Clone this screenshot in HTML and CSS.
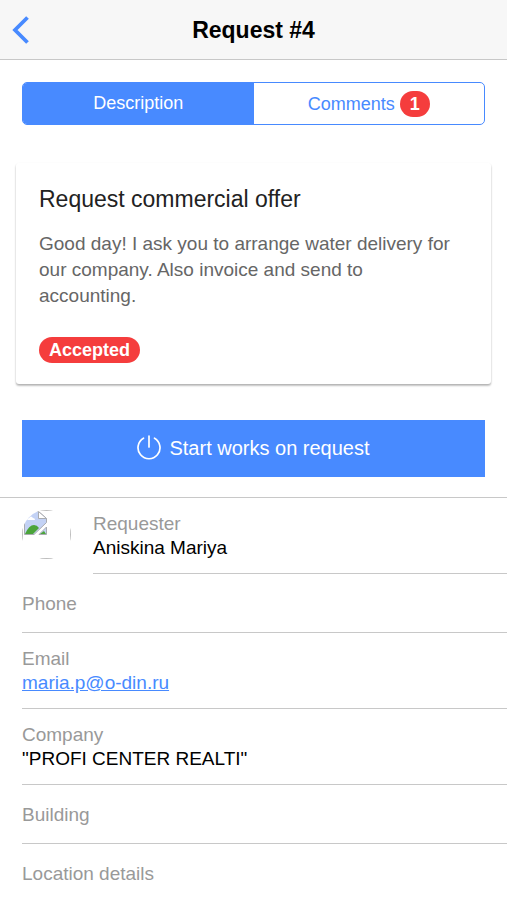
FILE: index.html
```html
<!DOCTYPE html>
<html lang="en">
  <head>
    <meta charset="UTF-8" />
    <meta name="viewport" content="width=device-width, initial-scale=1.0" />
    <title>Request #4</title>
    <link rel="stylesheet" href="styles.css">
  </head>
  <body>
    <header class="toolbar">
      <button type="button" class="back" aria-label="Back">
        <svg width="18" height="28" viewBox="0 0 18 28">
          <path d="M15.5 1.5 3 14l12.5 12.5" fill="none" stroke="currentColor" stroke-width="3.8" />
        </svg>
      </button>
      <h1>Request #4</h1>
    </header>

    <main>
      <div class="segment">
        <button type="button" class="segment-button active">Description</button>
        <button type="button" class="segment-button">Comments <span class="badge">1</span></button>
      </div>

      <section class="card">
        <h2>Request commercial offer</h2>
        <p>Good day! I ask you to arrange water delivery for our company. Also invoice and send to accounting.</p>
        <span class="badge">Accepted</span>
      </section>

      <button type="button" class="start">
        <svg width="24" height="28" viewBox="0 0 24 28" fill="none" stroke="currentColor" stroke-width="1.7" stroke-linecap="round">
          <path d="M12 1v11" />
          <path d="M6.5 3.2a11 11 0 1 0 11 0" />
        </svg>
        Start works on request
      </button>

      <ul class="list">
        <li class="item-avatar">
          <svg class="avatar" width="49" height="49" viewBox="0 0 49 49" role="img" aria-label="Requester photo">
            <clipPath id="round"><circle cx="24.5" cy="24.5" r="24.5" /></clipPath>
            <g clip-path="url(#round)">
              <rect x="0.5" y="0.5" width="48" height="48" fill="none" stroke="#bdbdbd" />
              <path d="M2.5 1.5h14l8 7v4L12 24.5H2.5z" fill="#c3d2f5" stroke="#a9abb0" />
              <path d="M16.500 1.500v7h8z" fill="#fff" stroke="#a9abb0" />
              <path d="M5 10q0-2 2-2 2-3 4 0 2 0 2 2z" fill="#fff" />
              <path d="M3 24q4-9 9-9 3 0 5 3l-6 6z" fill="#4ba43a" />
              <path d="M24.500 17v7.500h-7.500z" fill="#c3d2f5" stroke="#a9abb0" />
              <path d="M18 24l4-3 2 3z" fill="#4ba43a" />
            </g>
          </svg>
          <div class="item">
            <span class="label">Requester</span>
            <span>Aniskina Mariya</span>
          </div>
        </li>
        <li class="item">
          <span class="label">Phone</span>
        </li>
        <li class="item">
          <span class="label">Email</span>
          <a href="mailto:maria.p@o-din.ru">maria.p@o-din.ru</a>
        </li>
        <li class="item">
          <span class="label">Company</span>
          <span>"PROFI CENTER REALTI"</span>
        </li>
        <li class="item">
          <span class="label">Building</span>
        </li>
        <li class="item">
          <span class="label">Location details</span>
        </li>
      </ul>
    </main>
  </body>
</html>
```
FILE: styles.css
```css
*,
*::before,
*::after {
  box-sizing: border-box;
}

:root {
  --primary: #488aff;
  --danger: #f53d3d;
  --line: #c8c8c8;
}

body {
  margin: 0;
  font-family: 'Helvetica Neue', 'Liberation Sans', Arial, sans-serif;
  font-size: 19px;
  line-height: 24px;
  color: #000;
  background-color: #fff;
}

button {
  padding: 0;
  border: none;
  background: none;
  color: var(--primary);
  font-family: inherit;
  cursor: pointer;
}

.toolbar {
  display: grid;
  grid-template-columns: 44px 1fr 44px;
  align-items: center;
  height: 60px;
  background-color: #f7f7f7;
  border-bottom: 1px solid var(--line);
}
.toolbar h1 {
  margin: 0;
  font-size: 23px;
  text-align: center;
}
.back {
  display: flex;
  padding: 8px 12px;
}

.segment {
  display: flex;
  height: 43px;
  margin: 22px 22px 38px;
  border: 1px solid var(--primary);
  border-radius: 5px;
  overflow: hidden;
}
.segment-button {
  flex: 1;
  font-size: 18px;
}
.segment-button.active {
  background-color: var(--primary);
  color: #fff;
}

.badge {
  display: inline-block;
  padding: 0 10px;
  border-radius: 13px;
  background-color: var(--danger);
  color: #fff;
  font-size: 18px;
  font-weight: bold;
  line-height: 26px;
}

.card {
  margin: 0 16px 36px;
  padding: 24px 32px 21px 23px;
  border-radius: 3px;
  box-shadow: 0 2px 2px rgba(0, 0, 0, 0.2), 0 1px 2px rgba(0, 0, 0, 0.15);
}
.card h2 {
  margin: 0 0 20px;
  font-size: 23px;
  font-weight: 500;
  color: #222;
}
.card p {
  margin: 0 0 28px;
  line-height: 26px;
  color: #666;
}

.start {
  display: flex;
  align-items: center;
  justify-content: center;
  gap: 8px;
  width: calc(100% - 44px);
  height: 57px;
  margin: 0 22px 20px;
  background-color: var(--primary);
  color: #fff;
  font-size: 20px;
}

.list {
  margin: 0;
  padding: 0;
  border-top: 1px solid var(--line);
  list-style: none;
}
.item {
  display: flex;
  flex-direction: column;
  align-items: flex-start;
  justify-content: center;
  min-height: 59px;
  margin-left: 22px;
  padding: 14px 0 13px;
  border-bottom: 1px solid var(--line);
}
.item:last-child {
  border-bottom-color: transparent;
}
.item-avatar {
  display: flex;
  align-items: flex-start;
  padding-left: 22px;
}
.avatar {
  margin-top: 12px;
}
.item-avatar .item {
  flex: 1;
  border-bottom-color: var(--line);
}
.label {
  color: #999;
}
.item a {
  color: var(--primary);
}
```
